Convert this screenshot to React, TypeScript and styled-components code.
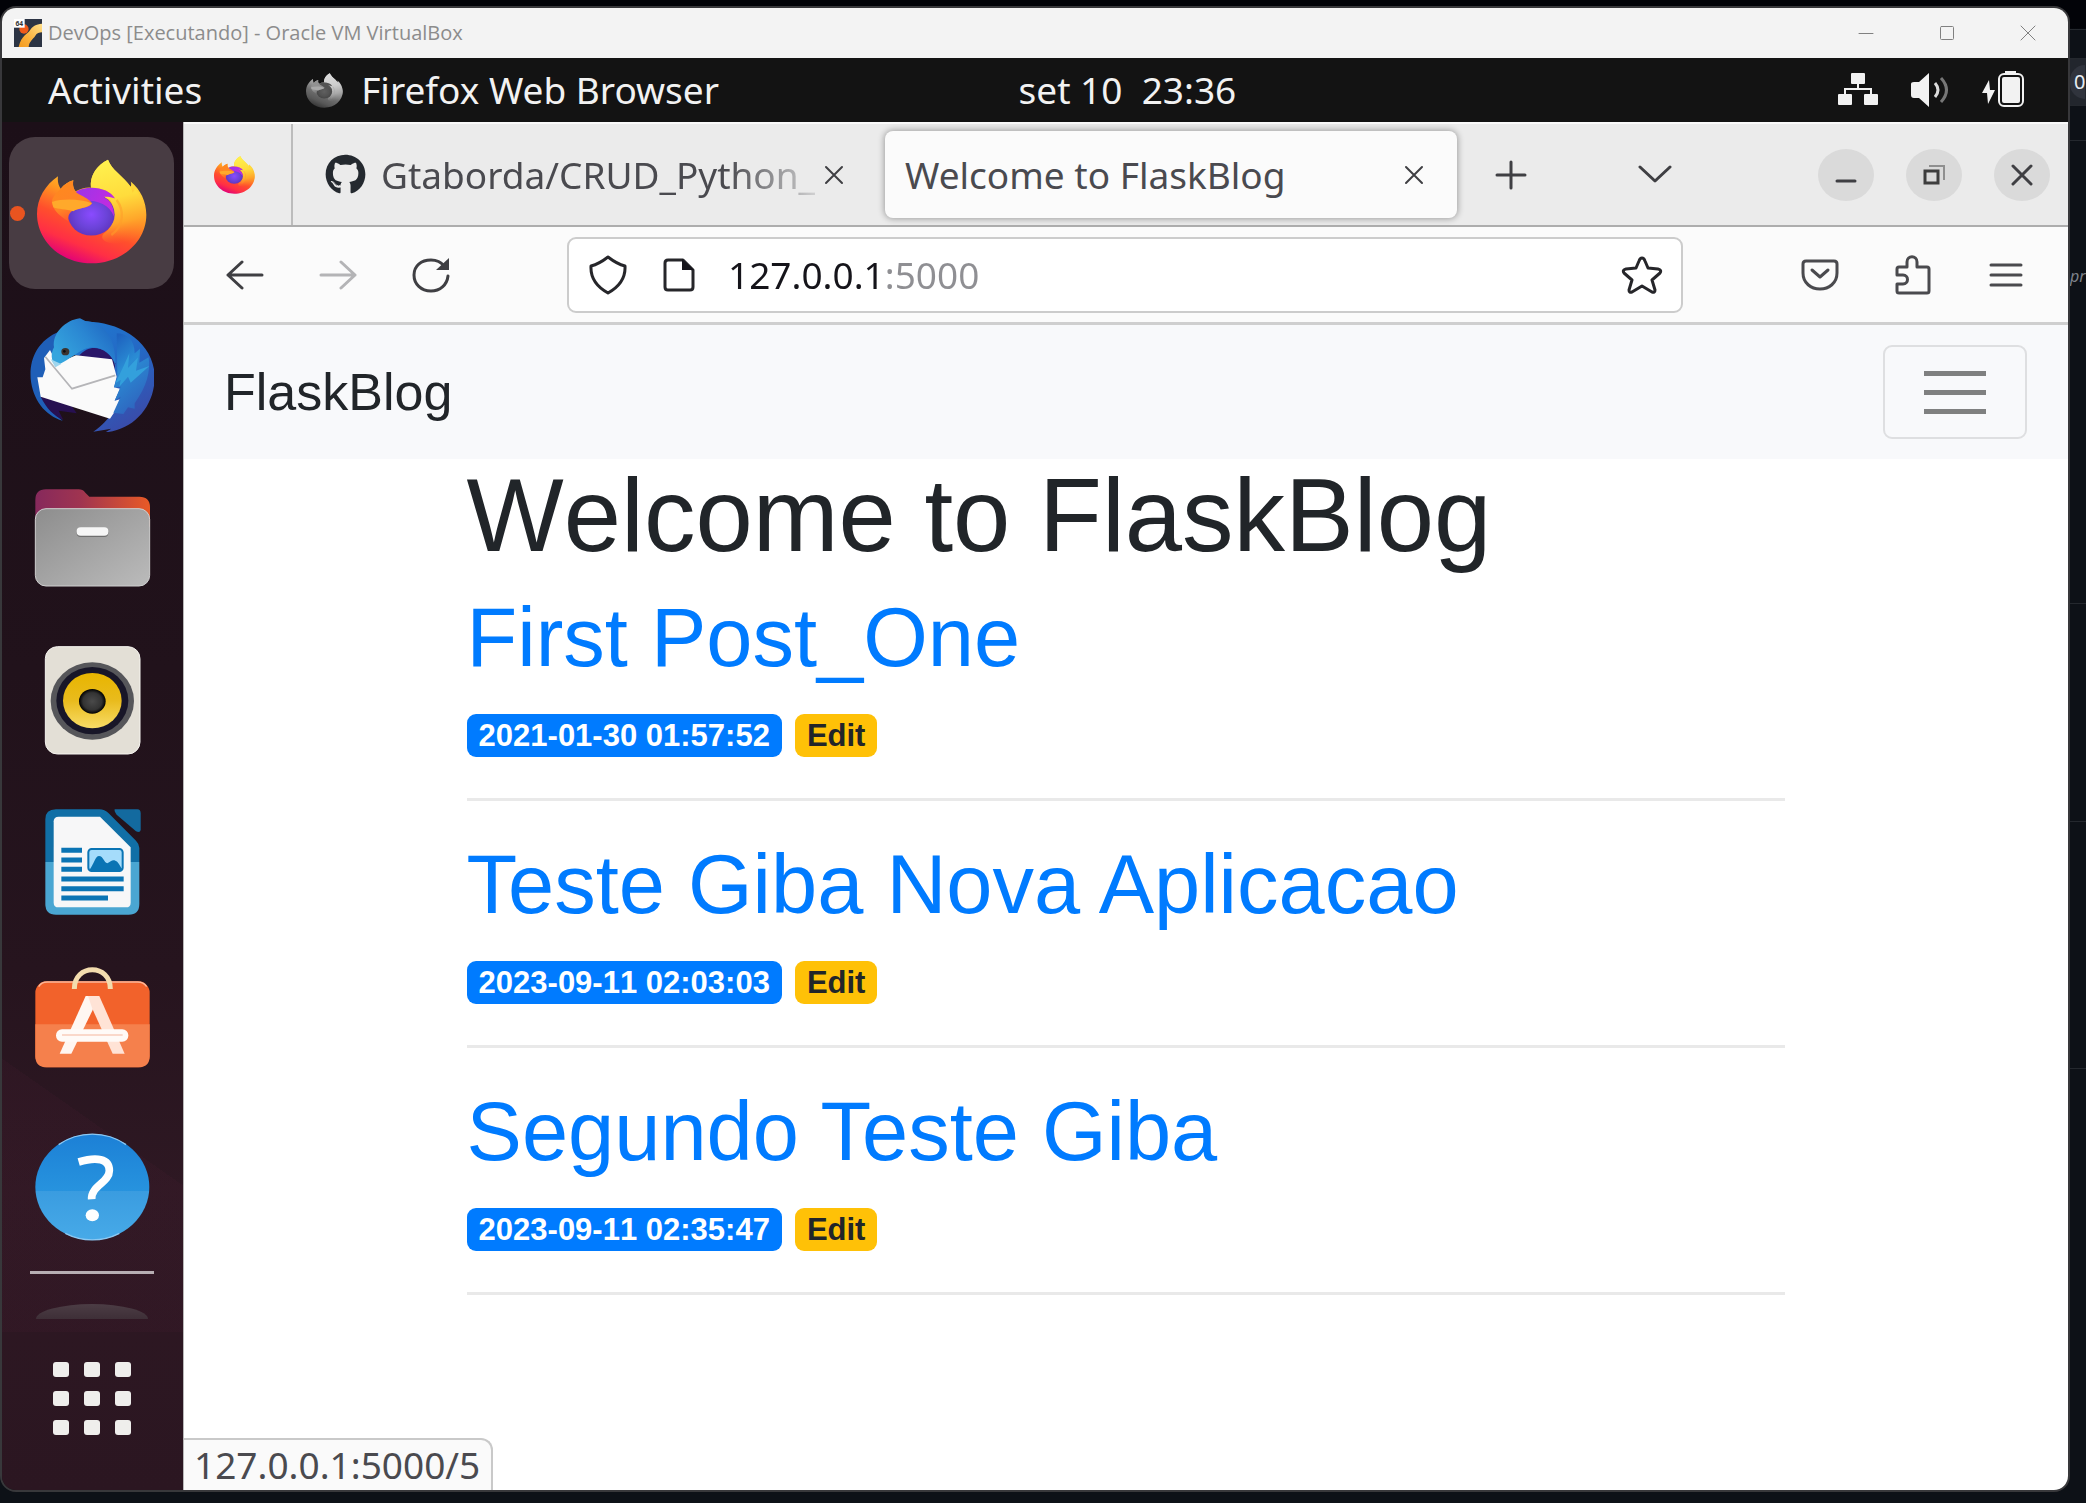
import React, { useId } from "react";
import styled, { createGlobalStyle, css } from "styled-components";
import { FaGithub } from "react-icons/fa";

const ubuntu = `"Noto Sans", "Open Sans", sans-serif`;
const sans = `"Liberation Sans", Arial, sans-serif`;

const GlobalStyle = createGlobalStyle`
  *, *::before, *::after { box-sizing: border-box; }
  body { margin: 0; background: #0d1117; font-family: ${ubuntu}; }
  button { margin: 0; padding: 0; border: 0; background: none; font: inherit; color: inherit; cursor: pointer; }
  a { text-decoration: none; }
  svg { display: block; flex: none; }
`;

/* ---------- Desktop behind the virtual machine ---------- */

const Desktop = styled.div`
  display: flex;
  min-height: 100vh;
  padding: 6px 0 11px;
  background: linear-gradient(180deg, #020308 0, #020308 28px, #0d1117 30px);
`;

const BackPage = styled.div`
  flex: none;
  display: flex;
  flex-direction: column;
  width: 16px;
  padding-top: 23px;
  overflow: hidden;
  color: #e6edf3;
`;

const BackRow = styled.div<{ $h: number; $fill?: boolean; $plain?: boolean }>`
  flex: none;
  display: flex;
  align-items: center;
  height: ${(p) => p.$h}px;
  border-top: ${(p) => (p.$plain ? 0 : 1)}px solid #24282e;
  background: ${(p) => (p.$fill ? "#22262d" : "transparent")};
  font-size: 20px;
  white-space: nowrap;
`;

const BackPill = styled.span`
  padding-left: 4px;
  border-radius: 16px 0 0 16px;
  background: #30343d;
  line-height: 34px;
`;

const BackNote = styled.i`
  color: #7d828a;
  font-size: 16px;
`;

/* ---------- VirtualBox window ---------- */

const VmWindow = styled.div`
  flex: 1;
  min-width: 0;
  display: flex;
  flex-direction: column;
  border: 2px solid #38383b;
  border-radius: 16px;
  overflow: hidden;
  background: #131313;
`;

const TitleBar = styled.header`
  display: flex;
  align-items: center;
  height: 50px;
  padding-left: 12px;
  background: #f3f3f3;
  color: #8c8c8c;
`;

const VmTitle = styled.span`
  flex: 1;
  padding-left: 6px;
  font-family: "Open Sans", "Noto Sans", sans-serif;
  font-size: 20px;
  line-height: 32px;
`;

const CaptionButton = styled.button`
  display: grid;
  place-items: center;
  width: 81px;
  height: 50px;
`;

/* ---------- GNOME top bar ---------- */

const TopBar = styled.div`
  display: grid;
  grid-template-columns: 11fr auto 9fr;
  align-items: center;
  height: 64px;
  background: #131313;
  color: #f2f2f2;
  font-size: 37px;
  line-height: 48px;
  white-space: pre;
`;

const TopLeft = styled.div`
  display: flex;
  align-items: center;
  padding-left: 46px;
`;

const AppMenu = styled.button`
  display: flex;
  align-items: center;
  gap: 18px;
  margin-left: 104px;
`;

const TopRight = styled.div`
  display: flex;
  align-items: center;
  justify-content: flex-end;
  gap: 33px;
  padding-right: 43px;
`;

const Workspace = styled.div`
  flex: 1;
  display: flex;
`;

/* ---------- Dock ---------- */

const Dock = styled.nav`
  flex: none;
  display: flex;
  flex-direction: column;
  align-items: center;
  gap: 10px;
  width: 181px;
  padding: 15px 9px 0 7px;
  background:
    linear-gradient(215deg, transparent 50%, rgba(70, 28, 48, 0.18) 50%) 0 790px / 100% 420px no-repeat,
    linear-gradient(180deg, #1c0f18 0%, #21121b 40%, #26141e 62%, #2e1823 78%, #2b1621 100%);
`;

const DockButton = styled.button<{ $active?: boolean }>`
  position: relative;
  display: grid;
  place-items: center;
  width: 165px;
  height: 152px;
  padding-bottom: ${(p) => (p.$active ? 4 : 0)}px;
  border-radius: 26px;
  background: ${(p) => (p.$active ? "#483c43" : "transparent")};
`;

const RunningDot = styled.i`
  position: absolute;
  left: 1px;
  top: 69px;
  width: 15px;
  height: 15px;
  border-radius: 50%;
  background: #e95420;
`;

const DockRule = styled.hr`
  width: 124px;
  height: 3px;
  margin: 0;
  border: 0;
  background: #b7aeb3;
`;

const DockPeek = styled.div`
  width: 112px;
  height: 15px;
  margin-top: 20px;
  border-radius: 50% 50% 0 0 / 100% 100% 0 0;
  background: linear-gradient(180deg, #4c3d45, #3e2f37);
`;

const AppsButton = styled.button`
  display: grid;
  grid-template-columns: repeat(3, 16px);
  gap: 14px 15px;
  margin-top: 33px;
`;

const AppDot = styled.i`
  height: 15px;
  border-radius: 3px;
  background: #efeeec;
`;

/* ---------- Firefox chrome ---------- */

const Browser = styled.main`
  flex: 1;
  min-width: 0;
  display: flex;
  flex-direction: column;
  border-left: 1px solid #b8b8b8;
  background: #ffffff;
`;

const TabStrip = styled.div`
  display: flex;
  align-items: center;
  height: 105px;
  padding-right: 18px;
  border-top: 2px solid #fafafa;
  border-bottom: 2px solid #adadad;
  background: #ebebeb;
  color: #4a4a4f;
`;

const PinnedTab = styled.button`
  align-self: stretch;
  display: grid;
  place-items: center;
  width: 109px;
  margin-right: 12px;
  padding-right: 6px;
  border-right: 2px solid #bcbcbc;
`;

const Tab = styled.div<{ $active?: boolean }>`
  flex: 0 1 572px;
  min-width: 0;
  display: flex;
  align-items: center;
  height: 87px;
  margin-right: 8px;
  padding: 0 26px 0 20px;
  border-radius: 8px;
  ${(p) =>
    p.$active &&
    css`
      background: #fbfbfb;
      box-shadow: 0 0 6px 1px rgba(0, 0, 0, 0.32);
    `}
`;

const TabIcon = styled.span`
  flex: none;
  margin-right: 15px;
`;

const TabTitle = styled.span<{ $fade?: boolean }>`
  flex: 1;
  min-width: 0;
  overflow: hidden;
  font-size: 37px;
  line-height: 52px;
  white-space: nowrap;
  ${(p) =>
    p.$fade &&
    css`
      mask-image: linear-gradient(90deg, #000 calc(100% - 90px), rgba(0, 0, 0, 0.15));
    `}
`;

const TabClose = styled.button`
  display: grid;
  place-items: center;
  width: 34px;
  height: 42px;
`;

const StripButton = styled.button<{ $lead: number }>`
  display: grid;
  place-items: center;
  width: 64px;
  height: 64px;
  margin-left: ${(p) => p.$lead}px;
`;

const WindowButtons = styled.div`
  display: flex;
  gap: 32px;
  margin-left: auto;
`;

const RoundButton = styled.button`
  display: grid;
  place-items: center;
  width: 56px;
  height: 52px;
  border-radius: 50%;
  background: #dadada;
`;

const NavBar = styled.div`
  display: flex;
  align-items: center;
  height: 98px;
  padding: 0 16px 0 14px;
  border-bottom: 3px solid #cfcfcf;
  background: #fbfbfb;
`;

const NavButton = styled.button`
  display: grid;
  place-items: center;
  width: 93px;
  height: 76px;
`;

const UrlBar = styled.form`
  flex: 1;
  display: flex;
  align-items: center;
  height: 76px;
  margin: 0 90px;
  padding: 0 18px 0 20px;
  border: 2px solid #cccccc;
  border-radius: 9px;
  background: #ffffff;
`;

const UrlInput = styled.input`
  flex: 1;
  min-width: 0;
  margin-left: 33px;
  padding: 0;
  border: 0;
  outline: 0;
  font-family: ${ubuntu};
  font-size: 37px;
  line-height: 52px;
  color: transparent;
  background: linear-gradient(90deg, #15141a 157px, #8f8f93 157px);
  background-clip: text;
  -webkit-background-clip: text;
`;

const UrlIcon = styled.button`
  margin-right: 36px;
  &:last-child { margin-right: 0; }
`;

/* ---------- FlaskBlog page ---------- */

const Viewport = styled.div`
  position: relative;
  flex: 1;
  font-family: ${sans};
  color: #212529;
`;

const SiteNav = styled.nav`
  display: flex;
  align-items: center;
  justify-content: space-between;
  height: 134px;
  padding: 0 41px 0 40px;
  background: #f8f9fb;
`;

const Brand = styled.a`
  color: #212529;
  font-size: 52px;
  line-height: 64px;
`;

const Toggler = styled.button`
  display: flex;
  flex-direction: column;
  align-items: center;
  justify-content: center;
  gap: 14px;
  width: 144px;
  height: 94px;
  border: 2px solid #dedfe1;
  border-radius: 9px;
`;

const TogglerBar = styled.i`
  width: 62px;
  height: 5px;
  background: #7f8080;
`;

const Container = styled.div`
  width: 70%;
  margin: 0 auto;
`;

const PageTitle = styled.h1`
  margin: 0 0 19px;
  font-size: 103px;
  font-weight: 400;
  font-kerning: none;
  line-height: 114px;
`;

const Post = styled.article`
  margin-bottom: 38px;
  border-bottom: 3px solid #e9e9e9;
`;

const PostTitle = styled.h2`
  margin: 0 0 30px;
  font-size: 83px;
  font-weight: 400;
  line-height: 92px;
`;

const PostLink = styled.a`
  color: #007bff;
`;

const Meta = styled.div`
  display: flex;
  gap: 13px;
  padding-bottom: 41px;
`;

const badge = css`
  padding: 0 12px;
  border-radius: 9px;
  font-size: 31px;
  font-weight: 700;
  font-kerning: none;
  line-height: 43px;
`;

const DateBadge = styled.time`
  ${badge}
  background: #007bff;
  color: #ffffff;
`;

const EditBadge = styled.a`
  ${badge}
  background: #ffc107;
  color: #212529;
`;

const LinkStatus = styled.div`
  position: absolute;
  left: 0;
  bottom: 0;
  padding: 0 11px 0 10px;
  border: 2px solid #c9c9c9;
  border-width: 2px 2px 0 0;
  border-radius: 0 12px 0 0;
  background: #fafafa;
  color: #4a4a4f;
  font-family: ${ubuntu};
  font-size: 37px;
  line-height: 50px;
`;

/* ---------- Drawings ---------- */

const GreyIcon = styled.span`
  filter: grayscale(1) brightness(0.95);
`;

function FirefoxLogo({ w, h }: { w: number; h: number }) {
  const id = useId().replace(/[^a-zA-Z0-9]/g, "");
  return (
    <svg width={w} height={h} viewBox="113 116 330 318" preserveAspectRatio="none">
      <defs>
        <linearGradient id={`${id}b`} x1="0.75" y1="0.1" x2="0.35" y2="1">
          <stop offset="0.1" stopColor="#ffd83a" />
          <stop offset="0.38" stopColor="#ff9a20" />
          <stop offset="0.62" stopColor="#ff4f2c" />
          <stop offset="0.82" stopColor="#ff2f45" />
          <stop offset="1" stopColor="#e0007a" />
        </linearGradient>
        <linearGradient id={`${id}y`} x1="0.4" y1="0" x2="0.55" y2="1">
          <stop offset="0" stopColor="#fff14e" />
          <stop offset="0.45" stopColor="#ffdc3c" />
          <stop offset="0.75" stopColor="#ffa62a" />
          <stop offset="1" stopColor="#ff6a2a" stopOpacity="0" />
        </linearGradient>
        <radialGradient id={`${id}p`} cx="0.5" cy="0.5" r="0.6">
          <stop offset="0" stopColor="#8a4bff" />
          <stop offset="0.55" stopColor="#6b43d8" />
          <stop offset="1" stopColor="#5a2fb4" />
        </radialGradient>
        <linearGradient id={`${id}m`} x1="0" y1="0" x2="1" y2="0.4">
          <stop offset="0" stopColor="#9a35e8" />
          <stop offset="1" stopColor="#c22be0" />
        </linearGradient>
        <linearGradient id={`${id}h`} x1="0" y1="0" x2="0.4" y2="1">
          <stop offset="0" stopColor="#ff8a1c" />
          <stop offset="0.7" stopColor="#ff8426" />
          <stop offset="1" stopColor="#ff5a2c" />
        </linearGradient>
      </defs>
      <path
        fill={`url(#${id}b)`}
        d="M176 168C174 182 177 196 184 206C194 193 207 184 222 180C219 192 221 204 229 214C245 205 262 201 275 203C270 168 292 134 326 118C336 148 372 168 394 200C396 196 396 190 394 184C424 208 441 246 441 285C441 366 368 432 277 432C186 432 113 366 113 282C113 236 138 194 176 168Z"
      />
      <path
        fill={`url(#${id}y)`}
        d="M326 118C336 148 372 168 394 200L400 218L408 206C432 238 441 262 438 300C428 348 386 376 340 372C308 368 300 350 318 338C346 318 352 270 332 240L312 230C322 229 336 230 346 234C332 212 302 202 275 203C270 168 292 134 326 118Z"
      />
      <path fill="none" stroke="#ff9d2a" strokeOpacity="0.55" strokeWidth="7" d="M352 240C374 270 376 318 336 346" />
      <ellipse cx="276" cy="284" rx="70" ry="64" fill={`url(#${id}p)`} />
      <path fill={`url(#${id}m)`} d="M228 216C268 192 330 204 347 236C336 231 322 230 313 231C338 246 344 266 344 290C330 252 290 240 250 242Z" />
      <path
        fill={`url(#${id}h)`}
        d="M184 206C194 193 207 184 222 180C219 198 224 214 238 222C256 232 272 240 278 250C272 262 250 264 232 268C212 272 205 286 206 304C180 290 150 260 160 236C166 224 176 214 184 206Z"
      />
      <path fill="#ffa92b" d="M158 246C190 236 240 236 278 250C268 264 238 264 222 274C200 268 176 268 162 262Z" />
    </svg>
  );
}

const ThunderbirdLogo = () => (
  <svg width="124" height="114" viewBox="90 594 372 342">
    <defs>
      <linearGradient id="tbRing" x1="0.2" y1="0" x2="0.8" y2="1">
        <stop offset="0" stopColor="#1f78cf" />
        <stop offset="0.5" stopColor="#2567c4" />
        <stop offset="1" stopColor="#3d47a6" />
      </linearGradient>
      <linearGradient id="tbHead" x1="0" y1="0.6" x2="1" y2="0">
        <stop offset="0" stopColor="#35a5de" />
        <stop offset="0.5" stopColor="#2a86d2" />
        <stop offset="1" stopColor="#1d5fbe" />
      </linearGradient>
      <linearGradient id="tbWing" x1="0.2" y1="0" x2="0.6" y2="1">
        <stop offset="0" stopColor="#1e62bf" />
        <stop offset="0.4" stopColor="#2a8cd4" />
        <stop offset="1" stopColor="#2f62bd" />
      </linearGradient>
    </defs>
    <path fill="#1f5fb8" d="M180 634C110 662 88 720 92 776C98 838 134 886 188 902C160 880 140 862 126 832L160 700Z" />
    <path fill="#271051" d="M122 830C140 866 160 886 190 900L176 872L230 880L210 850Z" />
    <path fill="url(#tbRing)" d="M240 606C340 596 462 656 464 770C464 860 400 930 316 937L334 926L280 935C306 918 322 900 334 880L340 720L180 700Z" />
    <path fill="#2a1668" d="M238 706C270 668 322 680 346 730L342 760L230 716Z" />
    <path fill="#fafafa" d="M150 690L132 714L136 748L128 772L112 772L122 830L330 896L350 866L360 838L344 842L360 806L342 802L350 770L336 718L228 706L170 730Z" />
    <path fill="none" stroke="#b5b5b8" strokeWidth="5" d="M136 710L216 806L346 766" />
    <path fill="url(#tbHead)" d="M346 740C338 692 288 672 252 688C222 704 200 724 168 738C152 722 152 700 162 682C156 640 196 600 240 595L256 603C300 604 350 640 346 740Z" />
    <path fill="url(#tbWing)" d="M350 640C380 640 404 660 404 700L420 686L418 728L446 712C452 756 440 800 404 850L404 866L384 862L370 882L340 878L362 830L344 842L362 800L342 802L352 770Z" />
    <path fill="#33a0dc" d="M372 736L388 700L384 744L414 712L408 752L448 738L392 788L384 770L358 800L362 780L346 790Z" />
    <path fill="#9fd6ee" d="M152 718L184 732L166 742Z" />
    <ellipse cx="196" cy="695" rx="12" ry="11" fill="#3b3330" />
    <circle cx="193" cy="694" r="4" fill="#0c0c10" />
  </svg>
);

const FilesLogo = () => (
  <svg width="124" height="114" viewBox="90 1080 372 342">
    <defs>
      <linearGradient id="flBack" x1="0" y1="0" x2="1" y2="0">
        <stop offset="0" stopColor="#86295c" />
        <stop offset="0.4" stopColor="#a03450" />
        <stop offset="1" stopColor="#e95a26" />
      </linearGradient>
      <linearGradient id="flFront" x1="0" y1="0" x2="1" y2="1">
        <stop offset="0" stopColor="#8d8d8d" />
        <stop offset="1" stopColor="#bbbbbb" />
      </linearGradient>
    </defs>
    <path fill="url(#flBack)" d="M106 1220V1140Q106 1108 138 1108H236Q248 1108 256 1118L268 1130H418Q450 1130 450 1162V1220Z" />
    <rect x="106" y="1166" width="343" height="232" rx="32" fill="url(#flFront)" stroke="#cfcfcf" strokeWidth="3" />
    <rect x="230" y="1226" width="95" height="25" rx="12" fill="#6f6f6f" />
    <rect x="230" y="1222" width="95" height="25" rx="12" fill="#f6f6f6" />
  </svg>
);

const SpeakerLogo = () => (
  <svg width="124" height="114" viewBox="90 126 372 342">
    <defs>
      <linearGradient id="spCone" x1="0" y1="0" x2="0" y2="1">
        <stop offset="0" stopColor="#e8b500" />
        <stop offset="0.5" stopColor="#e9bb1d" />
        <stop offset="1" stopColor="#f8dc66" />
      </linearGradient>
      <radialGradient id="spCore">
        <stop offset="0" stopColor="#4a4a4a" />
        <stop offset="0.7" stopColor="#333333" />
        <stop offset="1" stopColor="#000000" />
      </radialGradient>
    </defs>
    <rect x="136" y="140" width="284" height="322" rx="36" fill="#e3dfd6" stroke="#f6f4f0" strokeWidth="3" />
    <ellipse cx="277" cy="303" rx="125" ry="116" fill="#56565a" />
    <ellipse cx="277" cy="302" rx="108" ry="101" fill="#181628" />
    <ellipse cx="277" cy="302" rx="88" ry="83" fill="url(#spCone)" />
    <ellipse cx="277" cy="304" rx="40" ry="37" fill="url(#spCore)" />
  </svg>
);

const WriterLogo = () => (
  <svg width="124" height="114" viewBox="90 612 372 342">
    <path fill="#116fa6" d="M136 786V658Q136 628 168 628H298Q314 628 326 640L408 722Q418 732 418 744V786Z" />
    <path fill="#4aa6d2" d="M136 786H418V912Q418 944 386 944H168Q136 944 136 912Z" />
    <path fill="#136a9f" d="M344 628H412Q422 628 422 640V690Q420 700 408 694L350 644Q342 634 344 628Z" />
    <path fill="#f7f7f8" d="M176 650H300L392 742V908Q392 922 378 922H176Q161 922 161 908V664Q161 650 176 650Z" />
    <g stroke="#0a74b4" strokeWidth="15">
      <path d="M184 751H246M184 780H246M184 808H246M184 837H371M184 866H371M184 894H324" />
    </g>
    <rect x="265" y="747" width="103" height="66" rx="10" fill="#a5dcfb" stroke="#0a74b4" strokeWidth="6" />
    <path fill="#0a74b4" d="M268 810C282 792 286 768 297 768C310 768 312 788 322 790C332 784 338 778 346 782C356 786 358 796 366 806V812H268Z" />
  </svg>
);

const SoftwareLogo = () => (
  <svg width="124" height="114" viewBox="90 1098 372 342">
    <rect x="106" y="1144" width="343" height="258" rx="34" fill="#f2622b" />
    <path fill="#f5804c" d="M106 1273H449V1368Q449 1402 415 1402H140Q106 1402 106 1368Z" />
    <path fill="none" stroke="#fbb79a" strokeWidth="4" d="M116 1160Q124 1146 142 1146H413Q431 1146 440 1160" />
    <path fill="none" stroke="#f3dcae" strokeWidth="15" d="M223 1167C223 1090 331 1090 331 1167" />
    <path fill="#fff6f1" d="M257 1188H290L278 1230L214 1361H179Z" />
    <path fill="#ffe3d6" d="M264 1188H298L374 1361H338L277 1226Z" />
    <rect x="168" y="1288" width="217" height="37" rx="18" fill="#fffaf7" />
    <path stroke="#f9cdbb" strokeWidth="4" d="M186 1305H368" />
  </svg>
);

const HelpLogo = () => (
  <svg width="124" height="114" viewBox="90 144 372 342">
    <defs>
      <linearGradient id="hpDisc" x1="0" y1="0" x2="0" y2="1">
        <stop offset="0" stopColor="#1c80d6" />
        <stop offset="0.54" stopColor="#2793de" />
        <stop offset="0.54" stopColor="#3a9ce0" />
        <stop offset="1" stopColor="#47aae8" />
      </linearGradient>
    </defs>
    <ellipse cx="277" cy="321" rx="171" ry="159" fill="url(#hpDisc)" />
    <path fill="none" stroke="#8cc8f2" strokeWidth="4" d="M176 194C236 152 318 152 378 194M196 460C246 486 308 486 358 460" />
    <path fill="none" stroke="#ffffff" strokeWidth="23" d="M236 246C290 230 328 236 328 272C328 308 272 318 275 358" />
    <ellipse cx="277" cy="406" rx="20" ry="18" fill="#ffffff" />
  </svg>
);

const VirtualBoxLogo = () => (
  <svg width="28" height="28" viewBox="0 0 84 84">
    <defs>
      <linearGradient id="vbBand" x1="1" y1="0" x2="0" y2="1">
        <stop offset="0" stopColor="#ffe08a" />
        <stop offset="0.6" stopColor="#fbb03b" />
        <stop offset="1" stopColor="#f39a1e" />
      </linearGradient>
    </defs>
    <rect width="84" height="84" fill="#2c3444" />
    <path fill="url(#vbBand)" d="M84 14C66 16 54 22 48 34C42 46 22 48 14 84H44C46 66 56 62 64 50C68 42 76 40 84 40Z" />
    <circle cx="30" cy="30" r="14" fill="#ef5a1a" />
    <rect width="32" height="26" fill="#ffffff" />
    <text x="16" y="20" textAnchor="middle" fontFamily="Noto Sans" fontWeight="700" fontSize="20" fill="#333333">64</text>
  </svg>
);

type StrokeProps = { w: number; h: number; d: string; sw?: number; color?: string };
const Stroke = ({ w, h, d, sw = 3, color = "#3f3f43" }: StrokeProps) => (
  <svg width={w} height={h} viewBox={`0 0 ${w} ${h}`} fill="none" stroke={color} strokeWidth={sw} strokeLinecap="round" strokeLinejoin="round">
    <path d={d} />
  </svg>
);

const NetworkIcon = () => (
  <svg width="40" height="34" viewBox="0 0 40 34" fill="#f2f2f2">
    <rect x="13" y="0" width="14" height="11" rx="1" />
    <rect x="0" y="21" width="14" height="11" rx="1" />
    <rect x="26" y="21" width="14" height="11" rx="1" />
    <path d="M20 9V16M7 23V16H33V23" fill="none" stroke="#f2f2f2" strokeWidth="2" />
  </svg>
);

const VolumeIcon = () => (
  <svg width="38" height="34" viewBox="0 0 38 34">
    <path fill="#f2f2f2" d="M0 11Q0 9 3 9H8L18 0V34L8 25H3Q0 25 0 22Z" />
    <path fill="none" stroke="#dcdcdc" strokeWidth="3" d="M24 10Q30 17 24 24" />
    <path fill="none" stroke="#777777" strokeWidth="3" d="M30 5Q41 17 30 29" />
  </svg>
);

const BatteryIcon = () => (
  <svg width="43" height="38" viewBox="0 0 43 38">
    <path fill="#f2f2f2" d="M7 9L0 22H5L6 33L13 19H8Z" />
    <path fill="#f2f2f2" d="M23 4V0H34V4Z" />
    <rect x="17" y="3" width="24" height="32" rx="5" fill="none" stroke="#f2f2f2" strokeWidth="2" />
    <rect x="20" y="6" width="18" height="26" rx="2" fill="#f2f2f2" />
  </svg>
);

const ReloadIcon = () => (
  <svg width="38" height="36" viewBox="0 0 38 36">
    <path fill="none" stroke="#3f3f43" strokeWidth="3" strokeLinecap="round" d="M36 19C35 28 28 34 19 34C9 34 2 27 2 18C2 9 9 3 19 3C25 3 29 5 32 9" />
    <path fill="#3f3f43" d="M37 1V13H24Z" />
  </svg>
);

const DocIcon = () => (
  <svg width="32" height="34" viewBox="0 0 32 34">
    <path fill="none" stroke="#26262a" strokeWidth="3" strokeLinejoin="round" d="M5 2H20L30 12V29Q30 32 27 32H5Q2 32 2 29V5Q2 2 5 2Z" />
    <path fill="#15141a" d="M19 1L31 12H19Z" />
  </svg>
);

const PocketIcon = () => (
  <svg width="38" height="32" viewBox="0 0 38 32" fill="none" stroke="#4a4a4e" strokeWidth="3" strokeLinecap="round" strokeLinejoin="round">
    <path d="M5 2H33Q36 2 36 5V14C36 24 28 30 19 30C10 30 2 24 2 14V5Q2 2 5 2Z" />
    <path d="M11 11L19 18L27 11" />
  </svg>
);

const RestoreIcon = () => (
  <svg width="22" height="20" viewBox="0 0 22 20" fill="none">
    <path stroke="#8f8f8f" strokeWidth="2" d="M6 1H21V15" />
    <rect x="2" y="6" width="13" height="12" stroke="#3d3d3d" strokeWidth="3" />
  </svg>
);

const CROSS = "M2 2L18 18M18 2L2 18";
const CAPTION_CROSS = "M1 1L15 15M15 1L1 15";

const dockApps = [
  { name: "Thunderbird Mail", Logo: ThunderbirdLogo },
  { name: "Files", Logo: FilesLogo },
  { name: "Rhythmbox", Logo: SpeakerLogo },
  { name: "LibreOffice Writer", Logo: WriterLogo },
  { name: "Ubuntu Software", Logo: SoftwareLogo },
  { name: "Help", Logo: HelpLogo },
];

const posts = [
  { id: 1, title: "First Post_One", created: "2021-01-30 01:57:52" },
  { id: 4, title: "Teste Giba Nova Aplicacao", created: "2023-09-11 02:03:03" },
  { id: 5, title: "Segundo Teste Giba", created: "2023-09-11 02:35:47" },
];

export default function App() {
  return (
    <Desktop>
      <GlobalStyle />
      <VmWindow>
        <TitleBar>
          <VirtualBoxLogo />
          <VmTitle>DevOps [Executando] - Oracle VM VirtualBox</VmTitle>
          <CaptionButton aria-label="Minimizar">
            <Stroke w={16} h={16} sw={1} color="#808080" d="M1 8.5H15" />
          </CaptionButton>
          <CaptionButton aria-label="Maximizar">
            <Stroke w={16} h={16} sw={1} color="#808080" d="M2.5 1.5H13.5Q14.5 1.5 14.5 2.5V13.5Q14.5 14.5 13.5 14.5H2.5Q1.5 14.5 1.5 13.5V2.5Q1.5 1.5 2.5 1.5Z" />
          </CaptionButton>
          <CaptionButton aria-label="Fechar">
            <Stroke w={16} h={16} sw={1} color="#808080" d={CAPTION_CROSS} />
          </CaptionButton>
        </TitleBar>

        <TopBar>
          <TopLeft>
            <button>Activities</button>
            <AppMenu>
              <GreyIcon><FirefoxLogo w={37} h={35} /></GreyIcon>
              Firefox Web Browser
            </AppMenu>
          </TopLeft>
          <button>set 10  23:36</button>
          <TopRight>
            <NetworkIcon />
            <VolumeIcon />
            <BatteryIcon />
          </TopRight>
        </TopBar>

        <Workspace>
          <Dock aria-label="Dock">
            <DockButton $active aria-label="Firefox Web Browser">
              <RunningDot />
              <FirefoxLogo w={110} h={105} />
            </DockButton>
            {dockApps.map(({ name, Logo }) => (
              <DockButton key={name} aria-label={name}>
                <Logo />
              </DockButton>
            ))}
            <DockRule />
            <DockPeek />
            <AppsButton aria-label="Show Applications">
              {Array.from({ length: 9 }, (_, i) => <AppDot key={i} />)}
            </AppsButton>
          </Dock>

          <Browser>
            <TabStrip>
              <PinnedTab aria-label="Firefox">
                <FirefoxLogo w={41} h={38} />
              </PinnedTab>
              <Tab>
                <TabIcon><FaGithub size={41} color="#24292f" /></TabIcon>
                <TabTitle $fade>Gtaborda/CRUD_Python_</TabTitle>
                <TabClose aria-label="Close tab"><Stroke w={20} h={20} sw={2} d={CROSS} /></TabClose>
              </Tab>
              <Tab $active>
                <TabTitle>Welcome to FlaskBlog</TabTitle>
                <TabClose aria-label="Close tab"><Stroke w={20} h={20} sw={2} d={CROSS} /></TabClose>
              </Tab>
              <StripButton $lead={14} aria-label="New tab">
                <Stroke w={32} h={30} d="M2 15H30M16 2V28" />
              </StripButton>
              <StripButton $lead={80} aria-label="List all tabs">
                <Stroke w={34} h={20} d="M2 2L17 16L32 2" />
              </StripButton>
              <WindowButtons>
                <RoundButton aria-label="Minimize"><Stroke w={24} h={16} d="M3 14H21" /></RoundButton>
                <RoundButton aria-label="Restore"><RestoreIcon /></RoundButton>
                <RoundButton aria-label="Close"><Stroke w={24} h={22} d="M3 2L21 20M21 2L3 20" /></RoundButton>
              </WindowButtons>
            </TabStrip>

            <NavBar>
              <NavButton aria-label="Back"><Stroke w={38} h={30} d="M36 15H2M16 2L2 15L16 28" /></NavButton>
              <NavButton aria-label="Forward"><Stroke w={38} h={30} color="#b4b4b6" d="M2 15H36M22 2L36 15L22 28" /></NavButton>
              <NavButton aria-label="Reload"><ReloadIcon /></NavButton>
              <UrlBar>
                <UrlIcon type="button" aria-label="Tracking protection">
                  <Stroke w={38} h={40} color="#26262a" d="M19 2Q28 9 36 11Q37 28 19 38Q1 28 2 11Q10 9 19 2Z" />
                </UrlIcon>
                <DocIcon />
                <UrlInput aria-label="Address" defaultValue="127.0.0.1:5000" />
                <UrlIcon type="button" aria-label="Bookmark this page">
                  <Stroke w={42} h={38} color="#26262a" d="M21 2Q23 2 24 5L27 12L37 13Q41 14 39 17L31 24L34 34Q34 37 31 36L21 30L11 36Q8 37 8 34L11 24L3 17Q1 14 5 13L15 12L18 5Q19 2 21 2Z" />
                </UrlIcon>
              </UrlBar>
              <NavButton aria-label="Save to Pocket"><PocketIcon /></NavButton>
              <NavButton aria-label="Extensions">
                <Stroke w={38} h={40} color="#4a4a4e" d="M5 12H13V7C13 0 23 0 23 7V12H33Q35 12 35 14V36Q35 38 33 38H5Q3 38 3 36V29H9C15 29 15 20 9 20H3V14Q3 12 5 12Z" />
              </NavButton>
              <NavButton aria-label="Open application menu">
                <Stroke w={34} h={26} color="#4a4a4e" d="M2 3H32M2 13H32M2 23H32" />
              </NavButton>
            </NavBar>

            <Viewport>
              <SiteNav>
                <Brand href="#">FlaskBlog</Brand>
                <Toggler aria-label="Toggle navigation">
                  <TogglerBar />
                  <TogglerBar />
                  <TogglerBar />
                </Toggler>
              </SiteNav>
              <Container>
                <PageTitle>Welcome to FlaskBlog</PageTitle>
                {posts.map((post) => (
                  <Post key={post.id}>
                    <PostTitle><PostLink href={`#${post.id}`}>{post.title}</PostLink></PostTitle>
                    <Meta>
                      <DateBadge>{post.created}</DateBadge>
                      <EditBadge href={`#${post.id}/edit`}>Edit</EditBadge>
                    </Meta>
                  </Post>
                ))}
              </Container>
              <LinkStatus>127.0.0.1:5000/5</LinkStatus>
            </Viewport>
          </Browser>
        </Workspace>
      </VmWindow>

      <BackPage aria-hidden="true">
        <BackRow $h={29} />
        <BackRow $h={47} $fill><BackPill>0</BackPill></BackRow>
        <BackRow $h={35} />
        <BackRow $h={270}><BackNote>pr</BackNote></BackRow>
        <BackRow $h={193} $plain />
        <BackRow $h={218} />
        <BackRow $h={247} />
        <BackRow $h={200} />
      </BackPage>
    </Desktop>
  );
}
